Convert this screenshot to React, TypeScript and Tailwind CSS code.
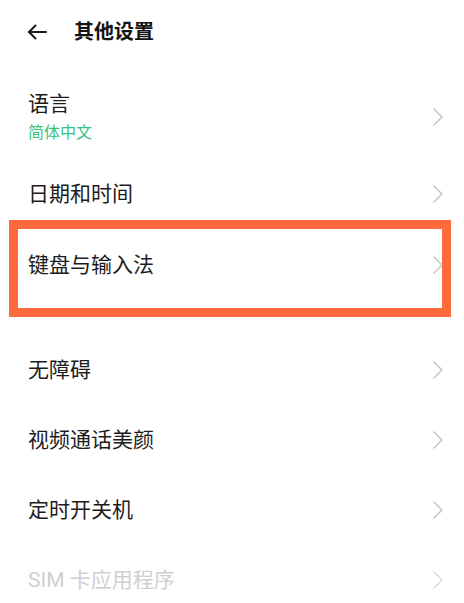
import React from "react";

const Chevron = ({ light = false }: { light?: boolean }) => (
  <svg width="10" height="18" viewBox="0 0 10 18" fill="none" className="shrink-0">
    <path
      d="M1 1 L9 9 L1 17"
      stroke={light ? "#dedede" : "#c6c6c6"}
      strokeWidth="1.6"
      strokeLinecap="round"
      strokeLinejoin="round"
    />
  </svg>
);

const BackArrow = () => (
  <svg width="20" height="16" viewBox="0 0 20 16" fill="none">
    <path d="M19 8 H2" stroke="#1a1a1a" strokeWidth="2" strokeLinecap="round" />
    <path d="M8.5 1.5 L2 8 L8.5 14.5" stroke="#1a1a1a" strokeWidth="2" strokeLinecap="round" strokeLinejoin="round" />
  </svg>
);

function Row({ label, disabled = false }: { label: string; disabled?: boolean }) {
  return (
    <div className="h-[70px] flex items-center justify-between pl-[28px] pr-[21px]">
      <span className={`text-[21px] leading-[28px] ${disabled ? "text-[#cfcfcf]" : "text-[#1c1c1c]"}`}>{label}</span>
      <Chevron light={disabled} />
    </div>
  );
}

export default function App() {
  const rows = ["无障碍", "视频通话美颜", "定时开关机"];

  return (
    <div
      className="w-[464px] h-[603px] overflow-hidden bg-white"
      style={{ fontFamily: "Roboto, 'Noto Sans CJK SC', sans-serif" }}
    >
      {/* header */}
      <div className="h-16 flex items-center pl-[27px]">
        <BackArrow />
        <h1 className="ml-[27px] text-[20px] font-bold text-[#141414] leading-7">其他设置</h1>
      </div>

      {/* language */}
      <div className="flex items-center justify-between pl-[28px] pr-[21px] pt-[26px] pb-[15px]">
        <div className="flex flex-col">
          <span className="text-[21px] leading-[28px] text-[#1c1c1c]">语言</span>
          <span className="mt-1 text-[16px] leading-[22px] text-[#3cc27e]">简体中文</span>
        </div>
        <Chevron />
      </div>

      <Row label="日期和时间" />

      {/* highlighted */}
      <div className="-mt-[9px] ml-[9px] mr-[13px] border-[9px] border-[#fe6a3c] pt-px pb-[8px]">
        <div className="h-[70px] flex items-center justify-between pl-[10px] -mr-px">
          <span className="text-[21px] leading-[28px] text-[#1c1c1c]">键盘与输入法</span>
          <Chevron />
        </div>
      </div>

      <div className="mt-[18px]">
        {rows.map((r) => (
          <Row key={r} label={r} />
        ))}
        <Row label="SIM 卡应用程序" disabled />
      </div>
    </div>
  );
}
